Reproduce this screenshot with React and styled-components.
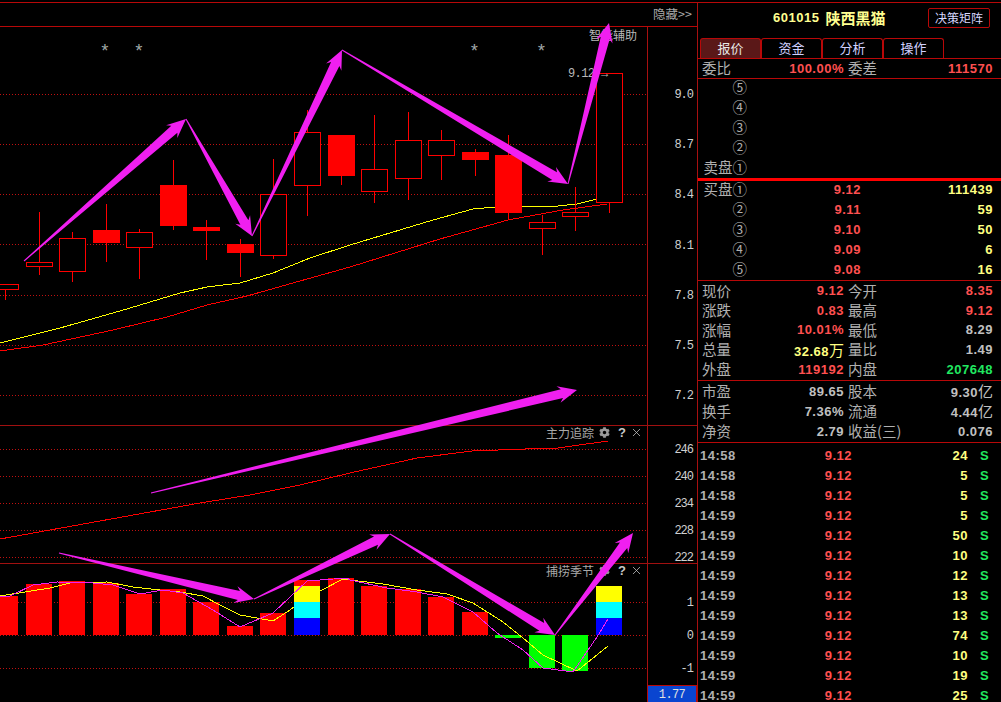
import styled, { createGlobalStyle } from "styled-components";
import { FaCog } from "react-icons/fa";
import { X } from "lucide-react";

const RED = "#ff0000";
const PINK = "#f01ff0";

// page coordinates, the svgs use them through their viewBox
const candles = [
  [5, -8, 284, 289, 284, 300, 0],
  [39, 26, 262, 266, 212, 275, 0],
  [72, 59, 238, 271, 232, 282, 0],
  [106, 93, 230, 243, 204, 262, 1],
  [139, 126, 232, 247, 229, 279, 0],
  [173, 160, 185, 226, 160, 230, 1],
  [206, 193, 227, 231, 220, 260, 1],
  [240, 227, 244, 253, 239, 277, 1],
  [273, 260, 194, 255, 159, 259, 0],
  [307, 294, 132, 185, 110, 216, 0],
  [341, 328, 135, 176, 135, 185, 1],
  [374, 361, 169, 191, 115, 203, 0],
  [408, 395, 140, 178, 112, 200, 0],
  [441, 428, 140, 155, 130, 180, 0],
  [475, 462, 152, 160, 149, 176, 1],
  [508, 495, 155, 213, 135, 220, 1],
  [542, 529, 222, 228, 215, 255, 0],
  [575, 562, 212, 216, 187, 231, 0],
  [609, 596, 73, 202, 73, 213, 0],
];

const maYellow =
  "0,343 60,328 120,311 180,293 207,287 240,283 273,273 310,258 350,245 433,220 473,209 495,207 522,206 558,206 577,204 597,199 609,197";
const maRed =
  "0,351 43,345 113,330 167,317 207,305 247,296 300,281 350,267 440,239 508,220 563,210 607,204";
const trackLine =
  "0,539 50,530 100,521 150,512 200,503 250,495 300,485 350,473 417,458 472,451 525,449 558,448 608,441";
const seasonYellow =
  "0,596 50,588 70,583 107,582 133,587 160,590 180,592 203,596 220,605 240,615 257,618 273,621 290,610 300,602 320,591 343,579 350,580 383,584 417,590 447,594 473,603 503,622 523,638 543,655 577,671 608,646";
const seasonPink =
  "0,597 10,596 33,585 57,582 93,583 113,585 140,594 163,590 183,593 213,610 240,627 273,613 307,581 347,578 350,580 387,588 417,592 443,597 473,612 497,633 523,650 543,668 573,672 597,637 608,619";

const seasonBars = [
  [-8, 596, 635, RED],
  [26, 584, 635, RED],
  [59, 581, 635, RED],
  [93, 583, 635, RED],
  [126, 594, 635, RED],
  [160, 589, 635, RED],
  [193, 602, 635, RED],
  [227, 626, 635, RED],
  [260, 613, 635, RED],
  [328, 578, 635, RED],
  [361, 586, 635, RED],
  [395, 589, 635, RED],
  [428, 597, 635, RED],
  [462, 612, 635, RED],
  [495, 635, 638, "#00ff00"],
  [529, 635, 668, "#00ff00"],
  [562, 635, 671, "#00ff00"],
];

const rainbowBars = [
  [294, [[580, 586, RED], [586, 602, "#ffff00"], [602, 618, "#00ffff"], [618, 635, "#0000ff"]]],
  [596, [[586, 602, "#ffff00"], [602, 618, "#00ffff"], [618, 635, "#0000ff"]]],
];

const arrows = [
  [24, 261, 186, 119],
  [186, 119, 252, 236],
  [252, 236, 342, 50],
  [342, 50, 568, 184],
  [568, 184, 609, 23],
  [151, 493, 577, 390],
  [59, 553, 254, 599],
  [254, 599, 390, 534],
  [390, 534, 555, 635],
  [555, 635, 633, 533],
];

function arrowPoints([x0, y0, x1, y1]) {
  const len = Math.hypot(x1 - x0, y1 - y0);
  const ux = (x1 - x0) / len;
  const uy = (y1 - y0) / len;
  const at = (back, side) =>
    `${x1 - ux * back - uy * side},${y1 - uy * back + ux * side}`;
  return [
    at(0, 0),
    at(19, 8.5),
    at(15.5, 4.6),
    at(len, 0.5),
    at(len, -0.5),
    at(15.5, -4.6),
    at(19, -8.5),
  ].join(" ");
}

const askRows = ["⑤", "④", "③", "②", "卖盘①"];
const bidRows = [
  ["买盘①", "9.12", "111439"],
  ["②", "9.11", "59"],
  ["③", "9.10", "50"],
  ["④", "9.09", "6"],
  ["⑤", "9.08", "16"],
];
const priceRows = [
  ["现价", "9.12", "red", "今开", "8.35", "red"],
  ["涨跌", "0.83", "red", "最高", "9.12", "red"],
  ["涨幅", "10.01%", "red", "最低", "8.29", "gray"],
  ["总量", "32.68|万", "yellow", "量比", "1.49", "gray"],
  ["外盘", "119192", "red", "内盘", "207648", "green"],
];
const statRows = [
  ["市盈", "89.65", "gray", "股本", "9.30|亿", "gray"],
  ["换手", "7.36%", "gray", "流通", "4.44|亿", "gray"],
  ["净资", "2.79", "gray", "收益(三)", "0.076", "gray"],
];
const trades = [
  ["14:58", "24"],
  ["14:58", "5"],
  ["14:58", "5"],
  ["14:59", "5"],
  ["14:59", "50"],
  ["14:59", "10"],
  ["14:59", "12"],
  ["14:59", "13"],
  ["14:59", "13"],
  ["14:59", "74"],
  ["14:59", "10"],
  ["14:59", "19"],
  ["14:59", "25"],
];

const GridLines = ({ ys }) =>
  ys.map((y) => (
    <line key={y} x1="0" x2="647" y1={y + 0.5} y2={y + 0.5} stroke="#c01010" strokeDasharray="1 2" />
  ));

function Candle({ c }) {
  const [cx, left, top, bottom, high, low, filled] = c;
  return (
    <g shapeRendering="crispEdges">
      <line x1={cx + 0.5} x2={cx + 0.5} y1={high} y2={low} stroke={RED} />
      {filled ? (
        <rect x={left} y={top} width={27} height={bottom - top} fill={RED} />
      ) : (
        <rect x={left + 0.5} y={top + 0.5} width={26} height={bottom - top} fill="#000" stroke={RED} />
      )}
    </g>
  );
}

function PanelTitle({ name }) {
  return (
    <Title>
      <TitleText>{name}</TitleText>
      <FaCog size={11} color="#9a9a9a" />
      <Help>?</Help>
      <X size={13} strokeWidth={1.4} color="#c8c8c8" />
    </Title>
  );
}

function Axis({ labels, top, step, children }) {
  return (
    <AxisColumn $top={top}>
      {labels.map((l) => (
        <AxisLabel key={l} $step={step}>
          {l}
        </AxisLabel>
      ))}
      {children}
    </AxisColumn>
  );
}

function Value({ text, color }) {
  const [num, unit] = text.split("|");
  return (
    <Num $c={color}>
      {num}
      {unit && <Unit>{unit}</Unit>}
    </Num>
  );
}

function QuoteRow({ row }) {
  const [a, b, bc, c, d, dc] = row;
  return (
    <StatRow>
      <Label>{a}</Label>
      <Value text={b} color={bc} />
      <SecondLabel>{c}</SecondLabel>
      <Value text={d} color={dc} />
    </StatRow>
  );
}

export default function App() {
  return (
    <Page>
      <GlobalStyle />
      <LeftPane>
        <TopBar>隐藏&gt;&gt;</TopBar>
        <ChartRow $h={399} $line>
          <ChartSvg viewBox="0 27 647 398" width="647" height="398">
            <GridLines ys={[94, 144, 194, 244, 295, 345, 395]} />
            {[105, 139, 474.5, 541.5].map((x) => (
              <ChartStar key={x} x={x} y={57} textAnchor="middle">
                *
              </ChartStar>
            ))}
            <polyline points={maYellow} fill="none" stroke="#ffff00" shapeRendering="crispEdges" />
            {candles.map((c) => (
              <Candle key={c[0]} c={c} />
            ))}
            <PriceTag x={568} y={77}>
              9.12 →
            </PriceTag>
            <polyline points={maRed} fill="none" stroke={RED} shapeRendering="crispEdges" />
          </ChartSvg>
          <Assist>智能辅助</Assist>
          <Axis labels={["9.0", "8.7", "8.4", "8.1", "7.8", "7.5", "7.2"]} top={43} step={50.17} />
        </ChartRow>
        <ChartRow $h={138} $line>
          <ChartSvg viewBox="0 426 647 137" width="647" height="137">
            <GridLines ys={[449, 476, 503, 530, 557]} />
            <polyline points={trackLine} fill="none" stroke={RED} shapeRendering="crispEdges" />
          </ChartSvg>
          <PanelTitle name="主力追踪" />
          <Axis labels={["246", "240", "234", "228", "222"]} top={10} step={27} />
        </ChartRow>
        <ChartRow $h={138}>
          <ChartSvg viewBox="0 564 647 138" width="647" height="138">
            <GridLines ys={[602, 635, 668]} />
            <g shapeRendering="crispEdges">
              {seasonBars.map(([x, y0, y1, fill]) => (
                <rect key={x} x={x} y={y0} width={26} height={y1 - y0} fill={fill} />
              ))}
              <polyline points={seasonYellow} fill="none" stroke="#ffff00" />
              {rainbowBars.map(([x, parts]) =>
                parts.map(([y0, y1, fill]) => (
                  <rect key={`${x}-${y0}`} x={x} y={y0} width={26} height={y1 - y0} fill={fill} />
                )),
              )}
              <polyline points={seasonPink} fill="none" stroke={PINK} />
            </g>
          </ChartSvg>
          <PanelTitle name="捕捞季节" />
          <Axis labels={["1", "0", "-1"]} top={22} step={33}>
            <ValueBox>1.77</ValueBox>
          </Axis>
        </ChartRow>
        <ArrowLayer viewBox="0 0 697 702" width="697" height="702">
          {arrows.map((a) => (
            <polygon key={a.join()} points={arrowPoints(a)} fill={PINK} />
          ))}
        </ArrowLayer>
      </LeftPane>

      <RightPane>
        <Header>
          <Code>601015</Code>
          <StockName>陕西黑猫</StockName>
          <DecisionButton>决策矩阵</DecisionButton>
        </Header>
        <Tabs>
          {["报价", "资金", "分析", "操作"].map((t, i) => (
            <Tab key={t} $active={i === 0}>
              {t}
            </Tab>
          ))}
        </Tabs>
        <RatioRow>
          <Label>委比</Label>
          <Num $c="red">100.00%</Num>
          <SecondLabel>委差</SecondLabel>
          <Num $c="red">111570</Num>
        </RatioRow>
        <BookBlock>
          {askRows.map((l) => (
            <BookRow key={l}>
              <BookLabel>{l}</BookLabel>
            </BookRow>
          ))}
        </BookBlock>
        <ThickRule />
        <BookBlock $line>
          {bidRows.map(([l, p, v]) => (
            <BookRow key={l}>
              <BookLabel>{l}</BookLabel>
              <Num $c="red">{p}</Num>
              <Num $c="yellow">{v}</Num>
            </BookRow>
          ))}
        </BookBlock>
        <QuoteBlock $h={100}>
          {priceRows.map((r) => (
            <QuoteRow key={r[0]} row={r} />
          ))}
        </QuoteBlock>
        <QuoteBlock $h={62}>
          {statRows.map((r) => (
            <QuoteRow key={r[0]} row={r} />
          ))}
        </QuoteBlock>
        <Trades>
          {trades.map(([t, v], i) => (
            <TradeRow key={i}>
              <TradeTime>{t}</TradeTime>
              <Num $c="red">9.12</Num>
              <Num $c="yellow">{v}</Num>
              <Side>S</Side>
            </TradeRow>
          ))}
        </Trades>
      </RightPane>
    </Page>
  );
}

const GlobalStyle = createGlobalStyle`
  html, body {
    margin: 0;
    background: #000;
  }
`;

const colors = {
  red: "#ff5050",
  yellow: "#ffff80",
  gray: "#c0c0c0",
  green: "#20e860",
};

const CJK = `"Noto Sans CJK SC", "Liberation Sans", sans-serif`;
const LINE = "#b80808";

const Page = styled.div`
  display: flex;
  width: 1001px;
  height: 702px;
  padding-top: 2px;
  box-sizing: border-box;
  overflow: hidden;
  background: #000;
  font-family: ${CJK};
  color: #c0c0c0;
`;

const LeftPane = styled.div`
  position: relative;
  flex: none;
  width: 697px;
  border-top: 1px solid ${LINE};
  display: flex;
  flex-direction: column;
`;

const TopBar = styled.div`
  flex: none;
  height: 23px;
  line-height: 22px;
  border-bottom: 1px solid ${LINE};
  text-align: right;
  padding-right: 5px;
  font-size: 12.5px;
  color: #a8a8a8;
`;

const ChartRow = styled.div`
  position: relative;
  flex: none;
  display: flex;
  height: ${(p) => p.$h}px;
  box-sizing: border-box;
  border-bottom: ${(p) => (p.$line ? "1px solid #a01010" : "none")};
`;

const ChartSvg = styled.svg`
  flex: none;
  display: block;
`;

const ArrowLayer = styled.svg`
  position: absolute;
  left: 0;
  top: -3px;
  pointer-events: none;
`;

const ChartStar = styled.text`
  font-family: "Liberation Mono", monospace;
  font-size: 18px;
  fill: #a0a8a8;
`;

const PriceTag = styled.text`
  font-family: "Liberation Mono", monospace;
  font-size: 12px;
  letter-spacing: -0.6px;
  fill: #b8b8b8;
`;

const Assist = styled.div`
  position: absolute;
  left: 589px;
  top: 0;
  line-height: 15px;
  font-size: 12px;
  color: #b8b8b8;
`;

const Title = styled.div`
  position: absolute;
  left: 546px;
  top: 0;
  height: 13px;
  display: flex;
  align-items: center;
  gap: 5px;
  font-size: 12px;
  color: #a8a8a8;
`;

const TitleText = styled.span`
  white-space: nowrap;
`;

const Help = styled.b`
  font: bold 13px "Liberation Sans", sans-serif;
  color: #c8c8c8;
  margin: 0 -1px 0 3px;
`;

const AxisColumn = styled.div`
  flex: 1;
  display: flex;
  flex-direction: column;
  box-sizing: border-box;
  padding-top: ${(p) => p.$top}px;
  border-left: 1px solid #a81010;
`;

const AxisLabel = styled.div`
  flex: none;
  height: ${(p) => p.$step}px;
  display: flex;
  align-items: center;
  justify-content: flex-end;
  padding-right: 4px;
  font: 12px "Liberation Mono", monospace;
  letter-spacing: -1px;
  color: #d0d0d0;
`;

const ValueBox = styled.div`
  margin: auto 0 0 -1px;
  height: 20px;
  box-sizing: border-box;
  border: 1px solid ${LINE};
  background: #0a45d0;
  text-align: center;
  font: 12px/18px "Liberation Mono", monospace;
  letter-spacing: -0.6px;
  color: #e0e0e0;
`;

const RightPane = styled.div`
  flex: 1;
  min-width: 0;
  border-top: 1px solid ${LINE};
  border-left: 1px solid #a81010;
  display: flex;
  flex-direction: column;
`;

const Header = styled.div`
  flex: none;
  height: 35px;
  display: flex;
  align-items: center;
  padding: 0 11px 6px 75px;
  box-sizing: border-box;
`;

const Code = styled.span`
  font: bold 13px "Liberation Sans", sans-serif;
  letter-spacing: 0.5px;
  color: #ffff90;
`;

const StockName = styled.span`
  margin-left: 6px;
  font-size: 15px;
  font-weight: 700;
  color: #ffff90;
`;

const DecisionButton = styled.button`
  margin-left: auto;
  width: 62px;
  height: 20px;
  padding: 0;
  background: #000;
  border: 1px solid ${LINE};
  border-radius: 2px;
  font: 12px ${CJK};
  color: #d8d8ff;
`;

const Tabs = styled.div`
  flex: none;
  display: flex;
  height: 21px;
  box-sizing: border-box;
  padding-left: 2px;
  border-bottom: 1px solid ${LINE};
`;

const Tab = styled.div`
  width: 61px;
  box-sizing: border-box;
  text-align: center;
  line-height: 18px;
  font-size: 13px;
  border: 1px solid ${LINE};
  border-bottom: none;
  border-radius: 3px 3px 0 0;
  background: ${(p) => (p.$active ? "#5a1818" : "#000")};
  color: ${(p) => (p.$active ? "#e8e8e8" : "#d0d0ff")};
`;

const Num = styled.span`
  text-align: right;
  white-space: nowrap;
  font: bold 13px/1 "Liberation Sans", "Noto Sans CJK SC", sans-serif;
  letter-spacing: 0.5px;
  color: ${(p) => colors[p.$c]};
`;

const Unit = styled.span`
  font: 15px/1 ${CJK};
  letter-spacing: 0;
`;

const Label = styled.span`
  font-size: 14.5px;
  line-height: 1;
  white-space: nowrap;
  color: #b0b0b0;
`;

const SecondLabel = styled(Label)`
  padding-left: 4px;
`;

const statGrid = `
  display: grid;
  grid-template-columns: 44px 98px 48px 101px;
  align-items: center;
  padding: 0 8px 0 4px;
`;

const RatioRow = styled.div`
  ${statGrid}
  flex: none;
  height: 20px;
  box-sizing: border-box;
  border-bottom: 1px solid ${LINE};
`;

const StatRow = styled.div`
  ${statGrid}
  flex: 1;
  min-height: 0;
`;

const BookBlock = styled.div`
  flex: none;
  height: ${(p) => (p.$line ? 100 : 99)}px;
  box-sizing: border-box;
  display: flex;
  flex-direction: column;
  border-bottom: ${(p) => (p.$line ? `1px solid ${LINE}` : "none")};
`;

const BookRow = styled.div`
  flex: none;
  height: 20px;
  display: grid;
  grid-template-columns: 49px 114px 132px;
  align-items: center;

  &:first-child {
    margin-top: -2px;
  }
`;

const BookLabel = styled(Label)`
  text-align: right;
  justify-self: end;
`;

const ThickRule = styled.div`
  flex: none;
  height: 3px;
  background: #ff0000;
`;

const QuoteBlock = styled.div`
  flex: none;
  height: ${(p) => p.$h}px;
  box-sizing: border-box;
  display: flex;
  flex-direction: column;
  padding-bottom: 1px;
  border-bottom: 1px solid ${LINE};
`;

const Trades = styled.div`
  flex: 1;
  min-height: 0;
  overflow: hidden;
  padding-top: 2px;
`;

const TradeRow = styled.div`
  display: grid;
  grid-template-columns: 60px 92px 116px 33px;
  align-items: center;
  height: 20px;
  padding-left: 2px;
`;

const TradeTime = styled.span`
  font: bold 13px "Liberation Sans", sans-serif;
  letter-spacing: 0.5px;
  color: #b0b0b0;
`;

const Side = styled.span`
  padding-left: 12px;
  font: bold 13px "Liberation Sans", sans-serif;
  color: #20e860;
`;
